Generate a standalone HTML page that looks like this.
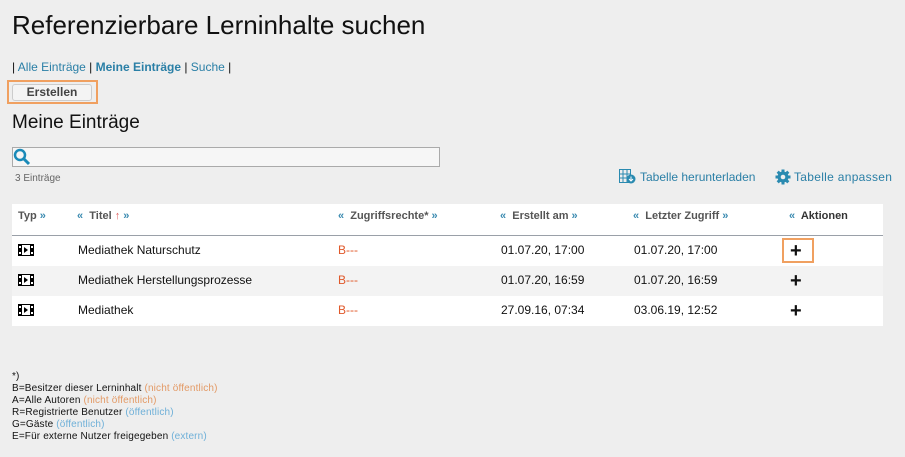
<!DOCTYPE html>
<html><head><meta charset="utf-8"><style>
*{margin:0;padding:0;box-sizing:border-box}
body{width:905px;height:457px;background:#eeeeee;font-family:"Liberation Sans",Arial,sans-serif;position:relative;overflow:hidden;color:#111}
.a{position:absolute;white-space:nowrap}
.bl{color:#2a7fa6}
.h{position:absolute;top:210px;font-size:11px;font-weight:bold;color:#555}
.h .q{color:#3a8ab0}
.r{position:absolute;left:12px;width:871px;height:30px}
.c{position:absolute;font-size:12px;top:7px}
.o{color:#e0582a}
.film{position:absolute;left:6px;top:8px}
.plus{position:absolute;font-weight:bold;font-size:20px;line-height:20px}
.f{position:absolute;left:12px;font-size:10px;line-height:12px;letter-spacing:0.15px}
.f .n{color:#e39a66}.f .p{color:#6fb0d8}
</style></head><body>
<div class="a" style="left:12px;top:10px;font-size:26px;color:#111">Referenzierbare Lerninhalte suchen</div>
<div class="a" style="left:12px;top:60px;font-size:12px">| <span class="bl">Alle Einträge</span> | <b class="bl">Meine Einträge</b> | <span class="bl">Suche</span> |</div>
<div class="a" style="left:7px;top:80px;width:91px;height:24px;border:2px solid #f0a060"></div>
<div class="a" style="left:12px;top:84px;width:80px;height:17px;border:1px solid #ccc;border-radius:3px;background:#f4f4f4;font-size:12px;font-weight:bold;color:#444;text-align:center;line-height:15px">Erstellen</div>
<div class="a" style="left:12px;top:112px;font-size:19px">Meine Einträge</div>
<div class="a" style="left:12px;top:147px;width:428px;height:20px;border:1px solid #aaa;background:#f6f6f6"></div>
<svg class="a" style="left:13px;top:148px" width="18" height="18" viewBox="0 0 18 18"><circle cx="7" cy="7" r="5" fill="none" stroke="#1a8ab8" stroke-width="2.5"/><path d="M10.5 10.5L16 16" stroke="#1a8ab8" stroke-width="3"/></svg>
<div class="a" style="left:15px;top:173px;font-size:10px;color:#666">3 Einträge</div>
<svg class="a" style="left:619px;top:169px" width="17" height="15" viewBox="0 0 17 15"><rect x="0.5" y="0.5" width="11" height="13" fill="none" stroke="#2a8ab0"/><path d="M0 5h11M0 9h11M4 0v14M8 0v14" stroke="#2a8ab0"/><circle cx="12" cy="10" r="4.5" fill="#2a8ab0"/><path d="M12 7.5v4M10 10l2 2 2-2" stroke="#fff" fill="none"/></svg>
<div class="a bl" style="left:640px;top:170px;font-size:12px">Tabelle herunterladen</div>
<svg class="a" style="left:775px;top:169px" width="16" height="16" viewBox="0 0 16 16"><g fill="#2a8ab0"><circle cx="8" cy="8" r="5.5"/><rect x="6.5" y="0.5" width="3" height="15"/><rect x="0.5" y="6.5" width="15" height="3"/><rect x="6.5" y="0.5" width="3" height="15" transform="rotate(45 8 8)"/><rect x="6.5" y="0.5" width="3" height="15" transform="rotate(-45 8 8)"/></g><circle cx="8" cy="8" r="2.3" fill="#eee"/></svg>
<div class="a bl" style="left:794px;top:170px;font-size:12px;letter-spacing:0.3px">Tabelle anpassen</div>
<div class="a" style="left:12px;top:204px;width:871px;height:122px;background:#fff"></div>
<div class="a" style="left:12px;top:235px;width:871px;height:1px;background:#9aa0a8"></div>
<div class="h" style="left:18px">Typ <span class="q">»</span></div>
<div class="h" style="left:77px"><span class="q">«</span>&nbsp; Titel <span style="color:#e06060">↑</span> <span class="q">»</span></div>
<div class="h" style="left:338px"><span class="q">«</span>&nbsp; Zugriffsrechte* <span class="q">»</span></div>
<div class="h" style="left:500px"><span class="q">«</span>&nbsp; Erstellt am <span class="q">»</span></div>
<div class="h" style="left:633px"><span class="q">«</span>&nbsp; Letzter Zugriff <span class="q">»</span></div>
<div class="h" style="left:789px"><span class="q">«</span>&nbsp; <span style="color:#333">Aktionen</span></div>
<svg width="0" height="0" style="position:absolute"><defs><g id="fm"><rect x="0" y="0" width="16" height="12" fill="#000"/><rect x="4" y="1" width="8" height="10" fill="#fff"/><path d="M6 3L10 6L6 9Z" fill="#000"/><rect x="1" y="2" width="2" height="2" fill="#fff"/><rect x="1" y="8" width="2" height="2" fill="#fff"/><rect x="13" y="2" width="2" height="2" fill="#fff"/><rect x="13" y="8" width="2" height="2" fill="#fff"/></g></defs></svg>
<div class="r" style="top:236px;background:#fff"><svg class="film" width="16" height="12"><use href="#fm"/></svg><div class="c" style="left:66px">Mediathek Naturschutz</div><div class="c o" style="left:326px">B---</div><div class="c" style="left:489px">01.07.20, 17:00</div><div class="c" style="left:622px">01.07.20, 17:00</div></div>
<div class="r" style="top:266px;background:#f3f3f3"><svg class="film" width="16" height="12"><use href="#fm"/></svg><div class="c" style="left:66px">Mediathek Herstellungsprozesse</div><div class="c o" style="left:326px">B---</div><div class="c" style="left:489px">01.07.20, 16:59</div><div class="c" style="left:622px">01.07.20, 16:59</div></div>
<div class="r" style="top:296px;background:#fff"><svg class="film" width="16" height="12"><use href="#fm"/></svg><div class="c" style="left:66px">Mediathek</div><div class="c o" style="left:326px">B---</div><div class="c" style="left:489px">27.09.16, 07:34</div><div class="c" style="left:622px">03.06.19, 12:52</div></div>
<div class="a" style="left:782px;top:238px;width:32px;height:25px;border:2px solid #f0a060"></div>
<div class="plus" style="left:790px;top:241px">+</div>
<div class="plus" style="left:790px;top:271px">+</div>
<div class="plus" style="left:790px;top:301px">+</div>
<div class="f" style="top:371px">*)<br>B=Besitzer dieser Lerninhalt <span class="n">(nicht öffentlich)</span><br>A=Alle Autoren <span class="n">(nicht öffentlich)</span><br>R=Registrierte Benutzer <span class="p">(öffentlich)</span><br>G=Gäste <span class="p">(öffentlich)</span><br>E=Für externe Nutzer freigegeben <span class="p">(extern)</span></div>
</body></html>
